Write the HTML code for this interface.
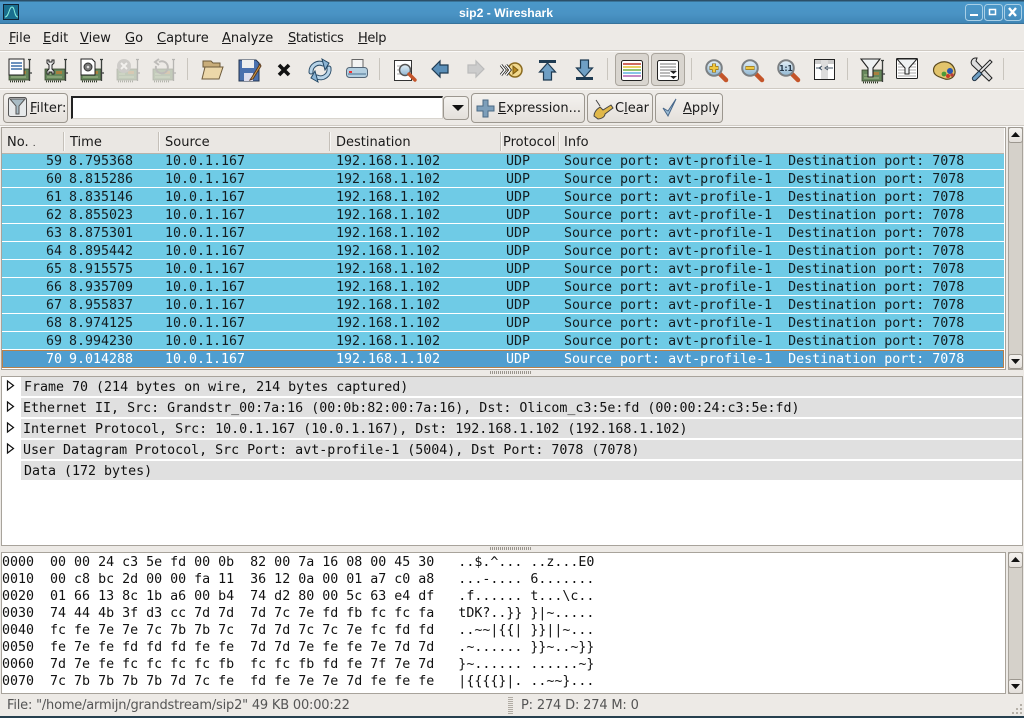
<!DOCTYPE html>
<html><head><meta charset="utf-8"><title>sip2 - Wireshark</title>
<style>
html,body{margin:0;padding:0;width:1024px;height:718px;overflow:hidden;background:#edeae6}
body{position:relative;font:13px/16px "DejaVu Sans",sans-serif;color:#1a1a1a}
div{position:absolute;box-sizing:border-box}
.m{position:absolute;top:31px;white-space:pre}
u{text-decoration-skip-ink:none}
.rule{left:0;width:1024px;height:2px;background:linear-gradient(#cfcac3 50%,#fbfaf9 50%)}
.btn{border:1px solid #9c978f;border-radius:4px;background:linear-gradient(#f4f2ef,#e4e0db);white-space:pre;line-height:30px}
.h{top:132px;height:22px;line-height:22px;white-space:pre}
.hs{top:132px;width:1px;height:19px;background:#c5c0b9;box-shadow:1px 0 #f8f7f5}
.r{left:2px;width:1002px;height:18px;background:#6fcbe6;border-bottom:1px solid #fff;color:#141e22}
.r span,.hx{position:absolute;top:1px;font:13.3px/17px "DejaVu Sans Mono",monospace;white-space:pre}
.f{height:16px}.f span{top:-1px}
.n{left:0;width:60px;text-align:right}.t{left:67px}.s{left:163px}.d{left:334px}.p{left:504px}.i{left:562px}
.sel{background:#4f9ed0;color:#fff;border:1px solid #b9814b;height:18px}
.sel span{top:0}.sel .n{left:-1px}.sel .t{left:66px}.sel .s{left:162px}.sel .d{left:333px}.sel .p{left:503px}.sel .i{left:561px}
.dr{left:21px;width:1001px;height:19px;background:#e0e0e0;font:13.3px/21px "DejaVu Sans Mono",monospace;white-space:pre;color:#111;padding-left:2px}
.hx{left:2px;color:#111;width:1000px}
.sb{background:#d5d1ca;border:1px solid #a8a39b}
.sa{background:linear-gradient(#f4f2ef,#e4e0db);border:1px solid #9c978f;border-radius:3px}
</style></head><body>

<div style="left:0;top:0;width:1024px;height:24px;background:linear-gradient(#2b4f68 0,#2b4f68 1px,#4a98c9 2px,#4a93c4 14px,#3f86b6 23px,#2f5f80 24px)"></div>
<div style="left:0;top:4px;width:1012px;height:18px;text-align:center;color:#fff;font:bold 12.2px/18px 'Liberation Sans',sans-serif">sip2 - Wireshark</div>

<div class="m" style="left:9px"><u>F</u>ile</div>
<div class="m" style="left:43px"><u>E</u>dit</div>
<div class="m" style="left:80px"><u>V</u>iew</div>
<div class="m" style="left:125px"><u>G</u>o</div>
<div class="m" style="left:157px"><u>C</u>apture</div>
<div class="m" style="left:222px"><u>A</u>nalyze</div>
<div class="m" style="left:288px;letter-spacing:-.4px"><u>S</u>tatistics</div>
<div class="m" style="left:358px;letter-spacing:-.4px"><u>H</u>elp</div>
<div class="rule" style="top:50px"></div>
<div class="rule" style="top:88px"></div>

<div style="left:615px;top:53px;width:34px;height:33px;background:#d9d5cf;border:1px solid #aaa59d;border-radius:4px"></div>
<div style="left:651px;top:53px;width:34px;height:33px;background:#d9d5cf;border:1px solid #aaa59d;border-radius:4px"></div>

<div class="btn" style="left:3px;top:93px;width:65px;height:30px;padding-left:26px"><u>F</u>ilter:</div>
<div style="left:71px;top:96px;width:372px;height:23px;background:#fff;border:1px solid #777;border-top:2px solid #222;border-left:2px solid #222;border-bottom-color:#d8d4ce;border-right-color:#d8d4ce"></div>
<div class="btn" style="left:443px;top:96px;width:26px;height:24px"></div>
<div class="btn" style="left:471px;top:93px;width:114px;height:30px;padding-left:26px"><u>E</u>xpression...</div>
<div class="btn" style="left:587px;top:93px;width:66px;height:30px;padding-left:27px">C<u>l</u>ear</div>
<div class="btn" style="left:655px;top:93px;width:68px;height:30px;padding-left:27px"><u>A</u>pply</div>
<div class="rule" style="top:125px"></div>

<div style="left:1px;top:127px;width:1005px;height:243px;background:#fff;border:1px solid #a8a39b"></div>
<div style="left:2px;top:128px;width:1002px;height:26px;background:#eae7e3;border-bottom:1px solid #b8b3ab"></div>
<div class="h" style="left:7px">No. <span style="font-size:9px">.</span></div>
<div class="h" style="left:70px">Time</div>
<div class="h" style="left:165px">Source</div>
<div class="h" style="left:336px">Destination</div>
<div class="h" style="left:503px">Protocol</div>
<div class="h" style="left:564px">Info</div>
<div class="hs" style="left:63px"></div><div class="hs" style="left:158px"></div><div class="hs" style="left:329px"></div><div class="hs" style="left:500px"></div><div class="hs" style="left:558px"></div>

<div class="r f" style="top:154px"><span class="n">59</span><span class="t">8.795368</span><span class="s">10.0.1.167</span><span class="d">192.168.1.102</span><span class="p">UDP</span><span class="i">Source port: avt-profile-1  Destination port: 7078</span></div>
<div class="r" style="top:170px"><span class="n">60</span><span class="t">8.815286</span><span class="s">10.0.1.167</span><span class="d">192.168.1.102</span><span class="p">UDP</span><span class="i">Source port: avt-profile-1  Destination port: 7078</span></div>
<div class="r" style="top:188px"><span class="n">61</span><span class="t">8.835146</span><span class="s">10.0.1.167</span><span class="d">192.168.1.102</span><span class="p">UDP</span><span class="i">Source port: avt-profile-1  Destination port: 7078</span></div>
<div class="r" style="top:206px"><span class="n">62</span><span class="t">8.855023</span><span class="s">10.0.1.167</span><span class="d">192.168.1.102</span><span class="p">UDP</span><span class="i">Source port: avt-profile-1  Destination port: 7078</span></div>
<div class="r" style="top:224px"><span class="n">63</span><span class="t">8.875301</span><span class="s">10.0.1.167</span><span class="d">192.168.1.102</span><span class="p">UDP</span><span class="i">Source port: avt-profile-1  Destination port: 7078</span></div>
<div class="r" style="top:242px"><span class="n">64</span><span class="t">8.895442</span><span class="s">10.0.1.167</span><span class="d">192.168.1.102</span><span class="p">UDP</span><span class="i">Source port: avt-profile-1  Destination port: 7078</span></div>
<div class="r" style="top:260px"><span class="n">65</span><span class="t">8.915575</span><span class="s">10.0.1.167</span><span class="d">192.168.1.102</span><span class="p">UDP</span><span class="i">Source port: avt-profile-1  Destination port: 7078</span></div>
<div class="r" style="top:278px"><span class="n">66</span><span class="t">8.935709</span><span class="s">10.0.1.167</span><span class="d">192.168.1.102</span><span class="p">UDP</span><span class="i">Source port: avt-profile-1  Destination port: 7078</span></div>
<div class="r" style="top:296px"><span class="n">67</span><span class="t">8.955837</span><span class="s">10.0.1.167</span><span class="d">192.168.1.102</span><span class="p">UDP</span><span class="i">Source port: avt-profile-1  Destination port: 7078</span></div>
<div class="r" style="top:314px"><span class="n">68</span><span class="t">8.974125</span><span class="s">10.0.1.167</span><span class="d">192.168.1.102</span><span class="p">UDP</span><span class="i">Source port: avt-profile-1  Destination port: 7078</span></div>
<div class="r" style="top:332px"><span class="n">69</span><span class="t">8.994230</span><span class="s">10.0.1.167</span><span class="d">192.168.1.102</span><span class="p">UDP</span><span class="i">Source port: avt-profile-1  Destination port: 7078</span></div>
<div class="r sel" style="top:350px"><span class="n">70</span><span class="t">9.014288</span><span class="s">10.0.1.167</span><span class="d">192.168.1.102</span><span class="p">UDP</span><span class="i">Source port: avt-profile-1  Destination port: 7078</span></div>

<div class="sb" style="left:1008px;top:127px;width:15px;height:243px"></div>
<div class="sa" style="left:1008px;top:127px;width:15px;height:16px"></div>
<div class="sa" style="left:1008px;top:354px;width:15px;height:15px"></div>

<div style="left:1px;top:376px;width:1022px;height:170px;background:#fff;border:1px solid #a8a39b"></div>
<div class="dr" style="top:377px;padding-left:3px">Frame 70 (214 bytes on wire, 214 bytes captured)</div>
<div class="dr" style="top:398px">Ethernet II, Src: Grandstr_00:7a:16 (00:0b:82:00:7a:16), Dst: Olicom_c3:5e:fd (00:00:24:c3:5e:fd)</div>
<div class="dr" style="top:419px">Internet Protocol, Src: 10.0.1.167 (10.0.1.167), Dst: 192.168.1.102 (192.168.1.102)</div>
<div class="dr" style="top:440px">User Datagram Protocol, Src Port: avt-profile-1 (5004), Dst Port: 7078 (7078)</div>
<div class="dr" style="top:461px;padding-left:3px">Data (172 bytes)</div>

<div style="left:1px;top:552px;width:1005px;height:142px;background:#fff;border:1px solid #a8a39b"></div>
<div class="hx" style="top:554px">0000  00 00 24 c3 5e fd 00 0b  82 00 7a 16 08 00 45 30   ..$.^... ..z...E0</div>
<div class="hx" style="top:571px">0010  00 c8 bc 2d 00 00 fa 11  36 12 0a 00 01 a7 c0 a8   ...-.... 6.......</div>
<div class="hx" style="top:588px">0020  01 66 13 8c 1b a6 00 b4  74 d2 80 00 5c 63 e4 df   .f...... t...\c..</div>
<div class="hx" style="top:605px">0030  74 44 4b 3f d3 cc 7d 7d  7d 7c 7e fd fb fc fc fa   tDK?..}} }|~.....</div>
<div class="hx" style="top:622px">0040  fc fe 7e 7e 7c 7b 7b 7c  7d 7d 7c 7c 7e fc fd fd   ..~~|{{| }}||~...</div>
<div class="hx" style="top:639px">0050  fe 7e fe fd fd fd fe fe  7d 7d 7e fe fe 7e 7d 7d   .~...... }}~..~}}</div>
<div class="hx" style="top:656px">0060  7d 7e fe fc fc fc fc fb  fc fc fb fd fe 7f 7e 7d   }~...... ......~}</div>
<div class="hx" style="top:673px">0070  7c 7b 7b 7b 7b 7d 7c fe  fd fe 7e 7e 7d fe fe fe   |{{{{}|. ..~~}...</div>

<div class="sb" style="left:1008px;top:552px;width:15px;height:142px"></div>
<div class="sa" style="left:1008px;top:552px;width:15px;height:16px"></div>
<div class="sa" style="left:1008px;top:679px;width:15px;height:15px"></div>

<div style="left:490px;top:371px;width:42px;height:3px;background:repeating-linear-gradient(90deg,#9a958d 0 1px,#edeae6 1px 2px)"></div>
<div style="left:490px;top:547px;width:42px;height:3px;background:repeating-linear-gradient(90deg,#9a958d 0 1px,#edeae6 1px 2px)"></div>

<div style="left:7px;top:698px;color:#555;white-space:pre;letter-spacing:-.2px">File: "/home/armijn/grandstream/sip2" 49 KB 00:00:22</div>
<div style="left:521px;top:698px;color:#555;white-space:pre;letter-spacing:-.17px">P: 274 D: 274 M: 0</div>
<div style="left:508px;top:697px;width:5px;height:18px;background:repeating-linear-gradient(#b0aba3 0 1px,#edeae6 1px 2px)"></div>
<div style="left:0;top:716px;width:1024px;height:2px;background:#26404f"></div>

<svg width="1024" height="718" viewBox="0 0 1024 718" style="position:absolute;left:0;top:0">
<defs>
<linearGradient id="ball" x1="0" y1="0" x2="0" y2="1"><stop offset="0" stop-color="#e6f1f8"/><stop offset="1" stop-color="#8fb6d2"/></linearGradient>
<g id="nic">
<rect x="1" y="11" width="20" height="11" fill="#66875c" stroke="#39452f" stroke-width=".8"/>
<path d="M3 16h6M3 19h15" stroke="#a8bd90" stroke-width="1"/>
<rect x="12" y="13" width="6" height="3" fill="#a8803f"/>
<path d="M2 23.500h16" stroke="#2f3a2a" stroke-width="1.800" stroke-dasharray="1 1"/>
<path d="M21.500 1v22M20 1.500h3M21 15h3" stroke="#3b3f3c" stroke-width="1.300" fill="none"/>
</g>
<g id="mag">
<path d="M14 14l7 7" stroke="#c4552a" stroke-width="4.500" stroke-linecap="round"/>
<circle cx="9" cy="9" r="7.800" fill="url(#ball)" stroke="#7c8083" stroke-width="2"/>
</g>
</defs>

<!-- title icon -->
<rect x="3.500" y="4.500" width="15" height="15" fill="#1a6f8f" stroke="#123"/>
<path d="M5 17c4 0 4-10 7-10s2 10 6 10" stroke="#8ed" fill="none"/>
<!-- window buttons -->
<g fill="none" stroke="#a8cfe6">
<rect x="965.500" y="4.500" width="17" height="16" rx="3"/><rect x="984.500" y="4.500" width="18" height="16" rx="3"/><rect x="1004.500" y="4.500" width="17" height="16" rx="3"/>
</g>
<path d="M970 15h8" stroke="#fff" stroke-width="2"/>
<rect x="989.500" y="9.500" width="6" height="5" fill="none" stroke="#fff" stroke-width="1.500"/>
<path d="M1009 8l7 8M1016 8l-7 8" stroke="#fff" stroke-width="2.400"/>

<!-- capture icons -->
<g transform="translate(8,58)"><use href="#nic"/><rect x="1" y="1" width="15" height="16" fill="#fff" stroke="#222"/><path d="M3 5h11M3 8h11M3 11h11" stroke="#3b6ea8" stroke-width="1.600"/></g>
<g transform="translate(44,58)"><use href="#nic"/><path d="M3 2v3l2 2v4l-2 2v3h2v-2h3v2h2v-3l-2-2V7l2-2V2H8v2H5V2z" fill="#eee" stroke="#222"/></g>
<g transform="translate(80,58)"><use href="#nic"/><path d="M1 1h11l3 3v13H1z" fill="#fff" stroke="#222"/><circle cx="8" cy="9" r="4" fill="#777" stroke="#333"/><circle cx="8" cy="9" r="1.300" fill="#ddd"/></g>
<g transform="translate(116,58)" opacity=".3"><use href="#nic"/><circle cx="8" cy="8" r="7" fill="#888"/><path d="M5 5l6 6M11 5l-6 6" stroke="#fff" stroke-width="2"/></g>
<g transform="translate(152,58)" opacity=".3"><use href="#nic"/><path d="M4 8a6 6 0 1 0 3-4M7 1L3 4l4 3" fill="none" stroke="#555" stroke-width="2"/></g>

<g stroke="#c9c5be"><path d="M187.500 58v22M379.500 58v22M607.500 58v22M691.500 58v22M847.500 58v22M1003.500 58v22"/></g>

<!-- folder -->
<path d="M203 61h8l2 2h7v4h-17z" fill="#c9ad7a" stroke="#6d5a3a"/>
<path d="M205 67h18l-4 12h-17z" fill="#ecd7a9" stroke="#6d5a3a"/>
<!-- save -->
<path d="M239 60h17l3 3v18h-20z" fill="#4a70ae" stroke="#24344f"/>
<rect x="242" y="60" width="12" height="8" fill="#eee"/><rect x="244" y="73" width="9" height="8" fill="#dde"/>
<path d="M260 64l-8 13-2 3 3-1 8-13z" fill="#d9a048" stroke="#5a3a20"/>
<!-- close -->
<path d="M279 65l10 10M289 65l-10 10" stroke="#111" stroke-width="3.600"/>
<!-- reload -->
<g fill="none" stroke-linecap="round">
<path d="M311 72a8.500 8.500 0 0 1 12-8M329 68a8.500 8.500 0 0 1-12 9" stroke="#2a4c68" stroke-width="5"/>
<path d="M311 72a8.500 8.500 0 0 1 12-8M329 68a8.500 8.500 0 0 1-12 9" stroke="#b8d4e8" stroke-width="3"/>
</g>
<path d="M322 59l7 4-4 7z" fill="#8bb4d4" stroke="#234764"/>
<path d="M318 82l-7-4 4-7z" fill="#8bb4d4" stroke="#234764"/>
<!-- print -->
<rect x="352" y="59.500" width="11" height="9" fill="#f4f4f4" stroke="#666"/>
<rect x="346.500" y="67.500" width="21" height="10" rx="3" fill="#b4cfe0" stroke="#567"/>
<rect x="349" y="71" width="3" height="2" fill="#e33"/>
<path d="M348 74h18" stroke="#7fa0b8" stroke-width="2"/>
<!-- find -->
<rect x="394.500" y="60.500" width="17" height="20" fill="#fff" stroke="#333"/>
<path d="M397 66h7M397 70h5M397 74h9" stroke="#aaa"/>
<circle cx="405" cy="70" r="5.500" fill="url(#ball)" stroke="#555" stroke-width="1.500"/>
<path d="M409 74l6 6" stroke="#c4552a" stroke-width="3.400" stroke-linecap="round"/>
<!-- arrows -->
<path d="M432 69l8-8v4h8v8h-8v4z" fill="#5b8fb8" stroke="#1f3b52" stroke-width="1.200"/>
<path d="M484 69l-8-8v4h-8v8h8v4z" fill="#ccc" stroke="#bbb" stroke-width="1.200"/>
<!-- jump -->
<circle cx="515" cy="70" r="7" fill="#f2d98e" stroke="#8a6a1f" stroke-width="1.500"/>
<path d="M513 66l5 4-5 4z" fill="#b98a20" stroke="#7a5a10"/>
<path d="M501 65l4 5-4 5M506 65l4 5-4 5" fill="none" stroke="#222" stroke-width="3"/>
<path d="M501 65l4 5-4 5M506 65l4 5-4 5" fill="none" stroke="#fff" stroke-width="1.400"/>
<!-- top bottom -->
<path d="M539 61.500h17" stroke="#1f3b52" stroke-width="3"/>
<path d="M547.500 63l8 9h-4v8h-8v-8h-4z" fill="#6f9fc4" stroke="#1f3b52" stroke-width="1.200"/>
<path d="M576 78.500h17" stroke="#1f3b52" stroke-width="3"/>
<path d="M584.500 77l8-9h-4v-8h-8v8h-4z" fill="#6f9fc4" stroke="#1f3b52" stroke-width="1.200"/>
<!-- colorize -->
<rect x="621.500" y="60.500" width="21" height="20" rx="2" fill="#fff" stroke="#222"/>
<path d="M623 64h18" stroke="#c0392b" stroke-width="1.500"/><path d="M623 67h18" stroke="#e0c030" stroke-width="1.500"/><path d="M623 70h18" stroke="#70b040" stroke-width="1.500"/><path d="M623 73h18" stroke="#60b0e0" stroke-width="1.500"/><path d="M623 76h18" stroke="#b060b0" stroke-width="1.500"/>
<!-- autoscroll -->
<rect x="657.500" y="60.500" width="21" height="20" rx="2" fill="#fff" stroke="#222"/>
<path d="M660 64h16M660 67h16M660 70h16M660 73h10M660 76h10" stroke="#777"/>
<path d="M670 71h7l-3.500 3zM670 76h7l-3.500 3z" fill="#222"/>
<!-- zoom -->
<g transform="translate(705,59)"><use href="#mag"/><path d="M4.500 9h9M9 4.500v9" stroke="#8a6a1f" stroke-width="4"/><path d="M5 9h8M9 5v8" stroke="#f0c840" stroke-width="2.600"/></g>
<g transform="translate(741,59)"><use href="#mag"/><path d="M4.500 9h9" stroke="#8a6a1f" stroke-width="4"/><path d="M5 9h8" stroke="#f0c840" stroke-width="2.600"/></g>
<g transform="translate(777,59)"><use href="#mag"/><text x="9" y="12" font-family="DejaVu Sans" font-size="7.500" font-weight="bold" fill="#234" text-anchor="middle">1:1</text></g>
<!-- resize -->
<rect x="814.500" y="59.500" width="20" height="20" fill="#fff" stroke="#222"/>
<rect x="815" y="60" width="19" height="4" fill="#ccc"/><rect x="821" y="60" width="7" height="19" fill="#ddd"/>
<path d="M816 68h5M822 66l-3 2 3 2M827 68h6M828 66l-3 2 3 2" stroke="#456" fill="none"/>
<!-- filters -->
<g transform="translate(861,59)"><use href="#nic"/><path d="M0 0h19l-7 9v9H7V9z" fill="#eef1f2" stroke="#222" stroke-width="1.100"/></g>
<rect x="896.500" y="58.500" width="21" height="20" rx="1" fill="#fff" stroke="#222"/>
<path d="M898 64h18M898 67h18M898 70h18M898 73h18M898 76h18" stroke="#aaa"/>
<path d="M897 59h20l-8 9v6h-4v-6z" fill="#eef1f2" stroke="#222"/>
<!-- palette -->
<path d="M933.500 70c0-6 8-9 13-8 6 1 9 7 8.500 11-1 5-6 7-10 6-5-2-11.500-3-11.500-9z" fill="#e2c46c" stroke="#5a4a20" stroke-width="1.200"/>
<circle cx="950" cy="71" r="3" fill="#2a56b0"/><circle cx="944" cy="74" r="2.400" fill="#4a9a3a"/><circle cx="948" cy="76" r="2" fill="#c83a2a"/><circle cx="952" cy="75" r="1.800" fill="#b8403a"/>
<!-- prefs -->
<path d="M975 58a4.500 4.500 0 0 0-3 7l17 16 3-3-16-17 1-3z" fill="#ddd" stroke="#222"/>
<path d="M990 60l2 2-11 11-2-2z" fill="#e8e8e8" stroke="#222"/>
<path d="M979 71l3 3-6 6c-2 2-5-1-3-3z" fill="#6f9fc4" stroke="#234"/>

<!-- filter icons -->
<rect x="8.500" y="97.500" width="18" height="19" rx="2" fill="#e6e9ea" stroke="#555"/>
<path d="M10 99h15l-6 7v8h-3v-8z" fill="#a9bcc5" stroke="#555"/>
<path d="M452 105h12l-6 6z" fill="#111"/>
<path d="M478 107h6v-6h5v6h6v5h-6v6h-5v-6h-6z" fill="#7d9fba" stroke="#4a6a84" transform="translate(-1,-1)"/>
<path d="M596 100l4 6M594 116c0-4 3-7 6-9l3 3 8-5 2 3-8 6c0 3-4 5-7 5z" fill="#e0b84a" stroke="#444"/>
<path d="M663 108l5 8 8-17-8 12z" fill="#9bbcd4" stroke="#47678a"/>

<!-- tree arrows -->
<g fill="#fff" stroke="#111" stroke-width="1.200">
<path d="M7.500 381v9l6-4.500z"/><path d="M7.500 402v9l6-4.500z"/><path d="M7.500 423v9l6-4.500z"/><path d="M7.500 444v9l6-4.500z"/>
</g>
<!-- scroll arrows -->
<path d="M1011 137h9l-4.500-5z" fill="#111"/><path d="M1011 359h9l-4.500 5z" fill="#111"/>
<path d="M1011 562h9l-4.500-5z" fill="#111"/><path d="M1011 684h9l-4.500 5z" fill="#111"/>
<!-- grip -->
<g fill="#b5b0a8"><rect x="1020" y="704" width="2" height="2"/><rect x="1016" y="708" width="2" height="2"/><rect x="1020" y="708" width="2" height="2"/><rect x="1012" y="712" width="2" height="2"/><rect x="1016" y="712" width="2" height="2"/><rect x="1020" y="712" width="2" height="2"/></g>
</svg>
</body></html>
